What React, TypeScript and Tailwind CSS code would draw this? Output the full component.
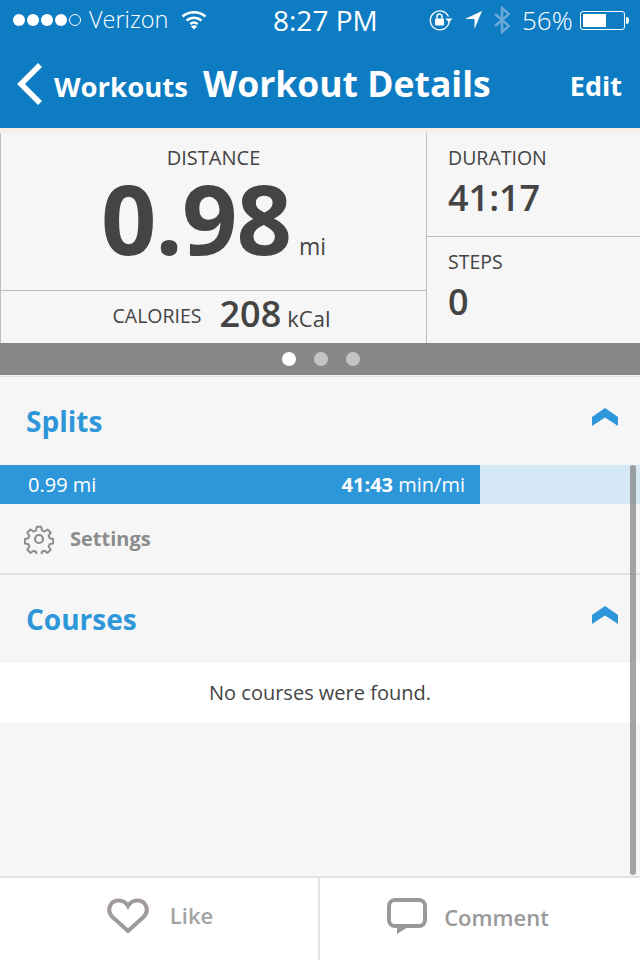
const font = { fontFamily: '"Open Sans", sans-serif' };

function SignalDots() {
  return (
    <div className="flex items-center gap-[2px]">
      {[0, 1, 2, 3].map((i) => (
        <span key={i} className="w-[12px] h-[12px] rounded-full bg-white" />
      ))}
      <span className="w-[12px] h-[12px] rounded-full border border-white" />
    </div>
  );
}

function Wifi() {
  return (
    <svg width="26" height="20" viewBox="0 0 26 20" fill="none" stroke="white" strokeWidth="2.4">
      <path d="M1.5 6.5C8 .8 18 .8 24.5 6.5" />
      <path d="M5.5 10.5C10 6.8 16 6.8 20.5 10.5" />
      <path d="M9.3 14C11.5 12.3 14.5 12.3 16.7 14" />
      <path d="M13 19.5 9.8 16.2C11.8 14.8 14.2 14.8 16.2 16.2Z" fill="white" stroke="none" />
    </svg>
  );
}

function RotationLock() {
  return (
    <svg width="24" height="22" viewBox="0 0 24 22" fill="none" stroke="white" strokeWidth="1.3">
      <path d="M20.2 13A9.5 9.5 0 1 1 19.5 7.5" />
      <path d="M16.5 9.5h7l-3.5 4Z" fill="white" stroke="none" />
      <rect x="6" y="9.5" width="9" height="7" rx="1" fill="white" stroke="none" />
      <path d="M8 9.5V7.5a2.5 2.5 0 0 1 5 0v2" strokeWidth="1.5" />
    </svg>
  );
}

function Battery() {
  return (
    <div className="flex items-center">
      <div className="w-[45px] h-[19px] rounded-[3px] border border-white p-[2px]">
        <div className="w-[23px] h-full bg-white" />
      </div>
      <div className="w-[3px] h-[7px] bg-white rounded-r-sm ml-[1px]" />
    </div>
  );
}

function Chevron() {
  return (
    <svg width="26" height="18" viewBox="0 0 26 18" fill="#2e97da">
      <path d="M13 0 26 9v9L13 9.500 0 18V9Z" />
    </svg>
  );
}

function Gear() {
  return (
    <svg width="30" height="30" viewBox="0 0 30 30" fill="none" stroke="#8c8c8c" strokeWidth="2.200" strokeLinejoin="round">
      <path d="M12.500 1.500h5l.8 4 2.700 1.200 3.500-2.300 3.500 3.500-2.300 3.500 1.100 2.700 4 .8v5l-4 .8-1.100 2.700 2.300 3.500-3.500 3.500-3.500-2.300-2.700 1.100-.8 4h-5l-.8-4-2.700-1.100-3.500 2.300-3.500-3.500 2.300-3.500-1.100-2.700-4-.8v-5l4-.8 1.100-2.700-2.300-3.500 3.500-3.500 3.500 2.300 2.700-1.200Z" transform="translate(1.500 1.500) scale(.9)" />
      <circle cx="15" cy="15" r="4" />
    </svg>
  );
}

function SectionHeader({ title }: { title: string }) {
  return (
    <div className="h-[88px] shrink-0 flex items-center justify-between pl-[26px] pr-[22px]">
      <h2 className="text-[28px] font-bold text-[#2e97da]">{title}</h2>
      <div className="mb-[8px] flex">
        <Chevron />
      </div>
    </div>
  );
}

export default function App() {
  return (
    <div style={font} className="relative w-[640px] h-[960px] overflow-hidden bg-[#f6f6f6] flex flex-col">
      {/* Nav */}
      <header className="h-[128px] shrink-0 bg-[#0e7cc3] text-white">
        <div className="h-[40px] flex items-center pl-[13px] pr-[11px] text-[23.500px]">
          <div className="flex items-center w-[260px]">
            <SignalDots />
            <span className="ml-[8px] font-light">Verizon</span>
            <span className="ml-[13px] flex"><Wifi /></span>
          </div>
          <span className="text-[28px]">8:27 PM</span>
          <div className="ml-auto flex items-center">
            <RotationLock />
            <svg className="ml-[11px]" width="19" height="20" viewBox="0 0 19 20" fill="white">
              <path d="M18 1 10.500 19V9H1Z" />
            </svg>
            <svg className="ml-[11px]" width="16" height="28" viewBox="0 0 16 28" fill="none" stroke="#6aa9d8" strokeWidth="2.500">
              <path d="M1 8 15 20 8 26V2l7 6L1 20" />
            </svg>
            <span className="ml-[12px] w-[50px] text-[26px] leading-[32px] font-light whitespace-nowrap">56%</span>
            <span className="ml-[8px]"><Battery /></span>
          </div>
        </div>
        <div className="h-[88px] flex items-center pl-[16px] pr-[18px]">
          <svg width="26" height="42" viewBox="0 0 26 42" fill="none" stroke="white" strokeWidth="5.500">
            <path d="M24 2 5 21l19 19" />
          </svg>
          <span className="ml-[12px] text-[27.500px] font-bold mt-[5px]">Workouts</span>
          <h1 className="ml-[15px] text-[35.500px] font-bold whitespace-nowrap">Workout Details</h1>
          <span className="ml-auto text-[27px] font-bold mt-[4px]">Edit</span>
        </div>
      </header>

      {/* Stats */}
      <div className="h-[5px] shrink-0 bg-[#f5efe6]" />
      <section className="h-[210px] shrink-0 flex border-l border-[#bdbdbd] text-[#444444]">
        <div className="w-[426px] border-r border-[#bdbdbd] flex flex-col">
          <div className="h-[158px] shrink-0 border-b border-[#bdbdbd] flex flex-col items-center">
            <span className="mt-[11px] text-[20px] leading-[27px]">DISTANCE</span>
            <div className="flex items-baseline mt-[6px]">
              <span className="text-[97px] font-bold leading-[80px] tracking-[-1px]">0.98</span>
              <span className="ml-[8px] text-[23px] leading-[24px]">mi</span>
            </div>
          </div>
          <div className="flex-1 flex items-baseline justify-center pl-[16px] pt-[1px]">
            <span className="text-[19.500px] leading-[44px] -translate-y-[4px]">CALORIES</span>
            <span className="ml-[18px] text-[36px] font-semibold leading-[44px]">208</span>
            <span className="ml-[6px] text-[22px] leading-[44px]">kCal</span>
          </div>
        </div>
        <div className="flex-1 flex flex-col pl-[21px]">
          <div className="h-[104px] -ml-[21px] pl-[21px] border-b border-[#bdbdbd]">
            <div className="mt-[11px] text-[19.500px] leading-[27px]">DURATION</div>
            <div className="text-[36px] font-semibold leading-[48px] mt-[3px]">41:17</div>
          </div>
          <div className="mt-[11px] text-[19.500px] leading-[27px]">STEPS</div>
          <div className="text-[36px] font-semibold leading-[48px] mt-[3px]">0</div>
        </div>
      </section>

      {/* Pager */}
      <div className="h-[32px] shrink-0 bg-[#888888] flex items-center justify-center gap-[18px] pl-[2px]">
        <span className="w-[14px] h-[14px] rounded-full bg-white" />
        <span className="w-[14px] h-[14px] rounded-full bg-[#c4c4c4]" />
        <span className="w-[14px] h-[14px] rounded-full bg-[#c4c4c4]" />
      </div>

      <div className="h-[2px] shrink-0 border-b border-[#e2e2e2]" />

      {/* Splits */}
      <SectionHeader title="Splits" />
      <div className="h-[39px] shrink-0 bg-[#d4e8f6]">
        <div className="w-[480px] h-full bg-[#2e97da] text-white flex items-center justify-between pl-[28px] pr-[15px] text-[20px]">
          <span>0.99 mi</span>
          <span><span className="font-bold">41:43</span> min/mi</span>
        </div>
      </div>
      <div className="h-[71px] shrink-0 flex items-center pl-[24px] border-b-2 border-[#e2e2e2]">
        <Gear />
        <span className="ml-[16px] text-[20px] font-bold text-[#8c8c8c]">Settings</span>
      </div>

      {/* Courses */}
      <SectionHeader title="Courses" />
      <div className="h-[60px] shrink-0 bg-white flex items-center justify-center text-[20px] text-[#444444]">
        No courses were found.
      </div>
      <div className="flex-1" />

      {/* Footer */}
      <footer className="h-[84px] shrink-0 bg-white border-t-2 border-[#e2e2e2] flex">
        <div className="w-[318px] flex items-center justify-center pb-[7px] pl-[2px]">
          <svg width="42" height="36" viewBox="0 0 42 36" fill="none" stroke="#a09a9a" strokeWidth="4">
            <path d="M21 33 5.500 19C-1 12.500 3 2.500 11.500 2.500c4 0 7.500 2 9.500 5.500 2-3.500 5.500-5.500 9.500-5.500C39 2.500 43 12.500 36.500 19Z" />
          </svg>
          <span className="ml-[21px] text-[22px] font-semibold text-[#a3a3a3]">Like</span>
        </div>
        <div className="flex-1 border-l-2 border-[#e2e2e2] flex items-center justify-center pb-[4px] pr-[24px]">
          <svg width="40" height="38" viewBox="0 0 40 38" fill="none">
            <rect x="2" y="2" width="36" height="26" rx="6" stroke="#999999" strokeWidth="4" />
            <path d="M10 29h11l-11 7Z" fill="#999999" />
          </svg>
          <span className="ml-[17px] text-[22px] font-semibold text-[#999999]">Comment</span>
        </div>
      </footer>

      {/* Scrollbar */}
      <div className="absolute left-[630px] top-[465px] w-[6px] h-[410px] rounded-full bg-[#808080]/70" />
    </div>
  );
}
